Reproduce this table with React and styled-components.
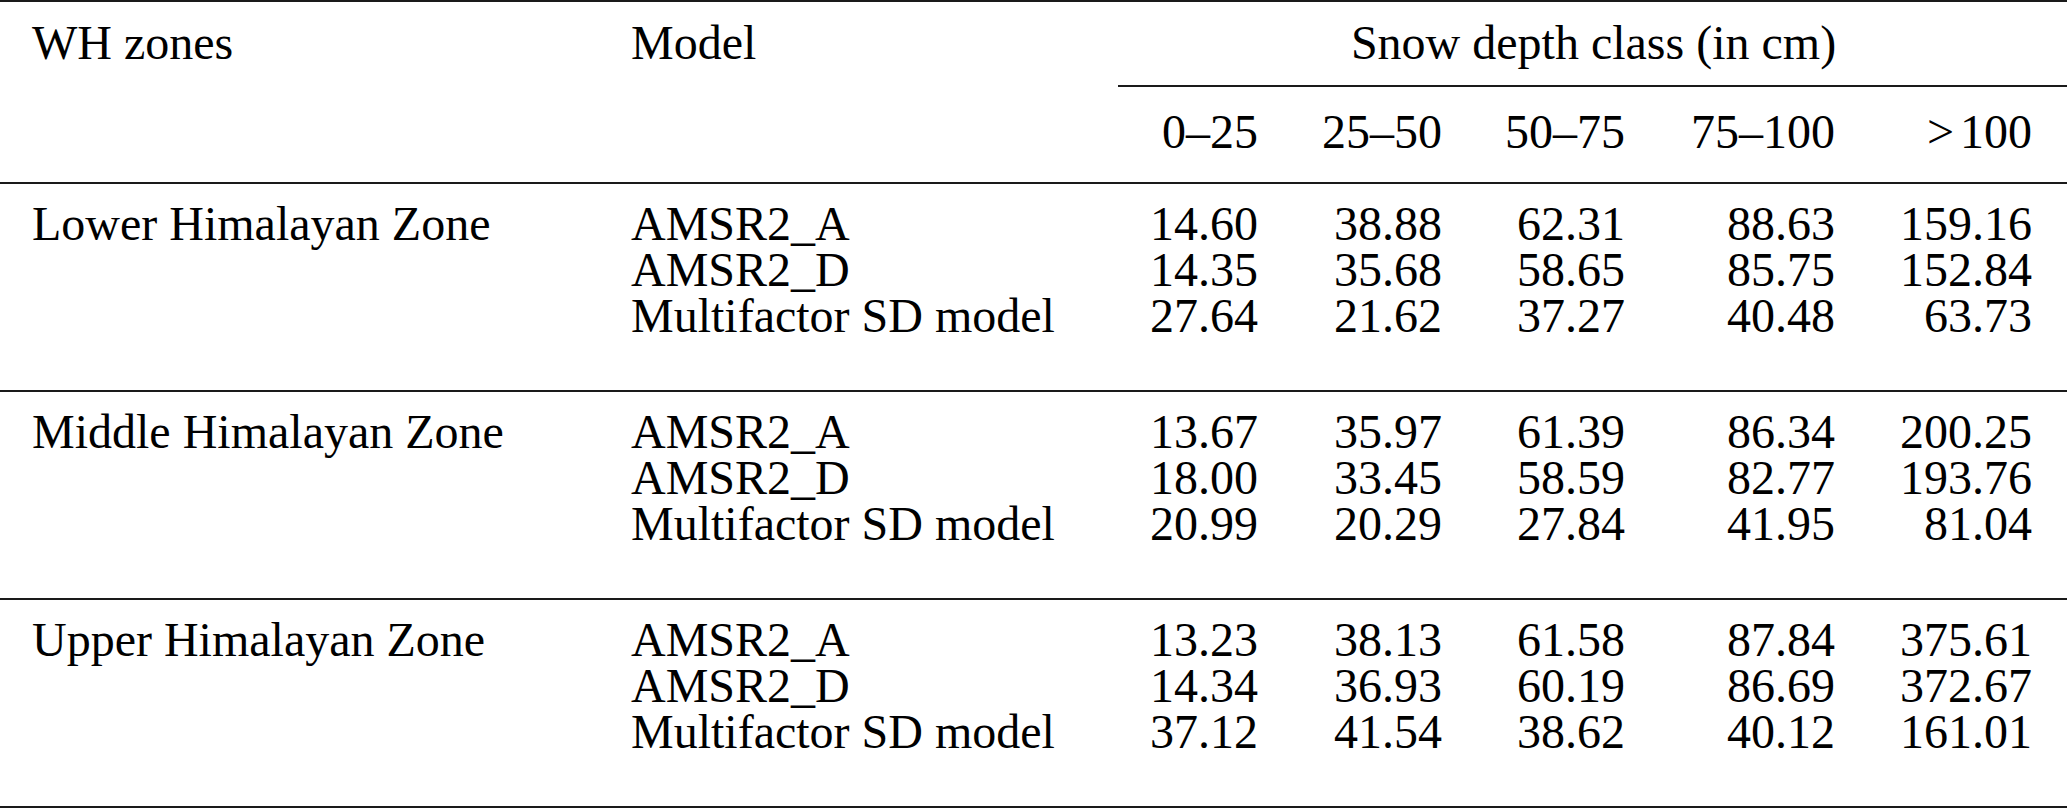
import React from 'react'
import styled, { createGlobalStyle } from 'styled-components'

const GlobalStyle = createGlobalStyle`
  html, body {
    margin: 0;
    padding: 0;
    background: #fff;
  }
  body {
    font-family: "Liberation Serif", "Times New Roman", serif;
    color: #000;
  }
`

const COLUMNS = '631px 487px 140px 184px 183px 210px 197px 35px'

const Table = styled.div`
  width: 2067px;
  border-top: 2px solid #1a1a1a;
  border-bottom: 2px solid #1a1a1a;
  font-size: 48px;
`

const Header = styled.div`
  display: grid;
  grid-template-columns: ${COLUMNS};
  line-height: 59px;
  padding: 11px 0 21px;
`

const Group = styled.div`
  display: grid;
  grid-template-columns: ${COLUMNS};
  line-height: 46px;
  border-top: 2px solid #1a1a1a;
  padding: 17px 0 51px;
`

const Cell = styled.div`
  white-space: nowrap;
  grid-column: ${(p) => p.col};
  grid-row: ${(p) => p.row || 'auto'};
  text-align: ${(p) => (p.num ? 'right' : 'left')};
  padding-left: ${(p) => (p.col === 1 ? '32px' : '0')};
`

const SpanHead = styled.div`
  grid-column: 3 / 9;
  grid-row: 1;
  text-align: center;
  padding-left: 2px;
  padding-bottom: 13px;
  border-bottom: 2px solid #1a1a1a;
  margin-bottom: 15px;
`

const Rel = styled.span`
  margin-right: 6px;
`

const classes = ['0–25', '25–50', '50–75', '75–100']

const zones = [
  {
    name: 'Lower Himalayan Zone',
    rows: [
      ['AMSR2_A', '14.60', '38.88', '62.31', '88.63', '159.16'],
      ['AMSR2_D', '14.35', '35.68', '58.65', '85.75', '152.84'],
      ['Multifactor SD model', '27.64', '21.62', '37.27', '40.48', '63.73'],
    ],
  },
  {
    name: 'Middle Himalayan Zone',
    rows: [
      ['AMSR2_A', '13.67', '35.97', '61.39', '86.34', '200.25'],
      ['AMSR2_D', '18.00', '33.45', '58.59', '82.77', '193.76'],
      ['Multifactor SD model', '20.99', '20.29', '27.84', '41.95', '81.04'],
    ],
  },
  {
    name: 'Upper Himalayan Zone',
    rows: [
      ['AMSR2_A', '13.23', '38.13', '61.58', '87.84', '375.61'],
      ['AMSR2_D', '14.34', '36.93', '60.19', '86.69', '372.67'],
      ['Multifactor SD model', '37.12', '41.54', '38.62', '40.12', '161.01'],
    ],
  },
]

function ZoneGroup({ zone }) {
  return (
    <Group>
      <Cell col={1} row={1}>
        {zone.name}
      </Cell>
      {zone.rows.map((r, i) => (
        <React.Fragment key={r[0]}>
          <Cell col={2} row={i + 1}>
            {r[0]}
          </Cell>
          {r.slice(1).map((v, j) => (
            <Cell key={j} col={j + 3} row={i + 1} num>
              {v}
            </Cell>
          ))}
        </React.Fragment>
      ))}
    </Group>
  )
}

export default function App() {
  return (
    <>
      <GlobalStyle />
      <Table>
        <Header>
          <Cell col={1} row={1}>
            WH zones
          </Cell>
          <Cell col={2} row={1}>
            Model
          </Cell>
          <SpanHead>Snow depth class (in cm)</SpanHead>
          {classes.map((c, i) => (
            <Cell key={c} col={i + 3} row={2} num>
              {c}
            </Cell>
          ))}
          <Cell col={7} row={2} num>
            <Rel>&gt;</Rel>100
          </Cell>
        </Header>
        {zones.map((z) => (
          <ZoneGroup key={z.name} zone={z} />
        ))}
      </Table>
    </>
  )
}
